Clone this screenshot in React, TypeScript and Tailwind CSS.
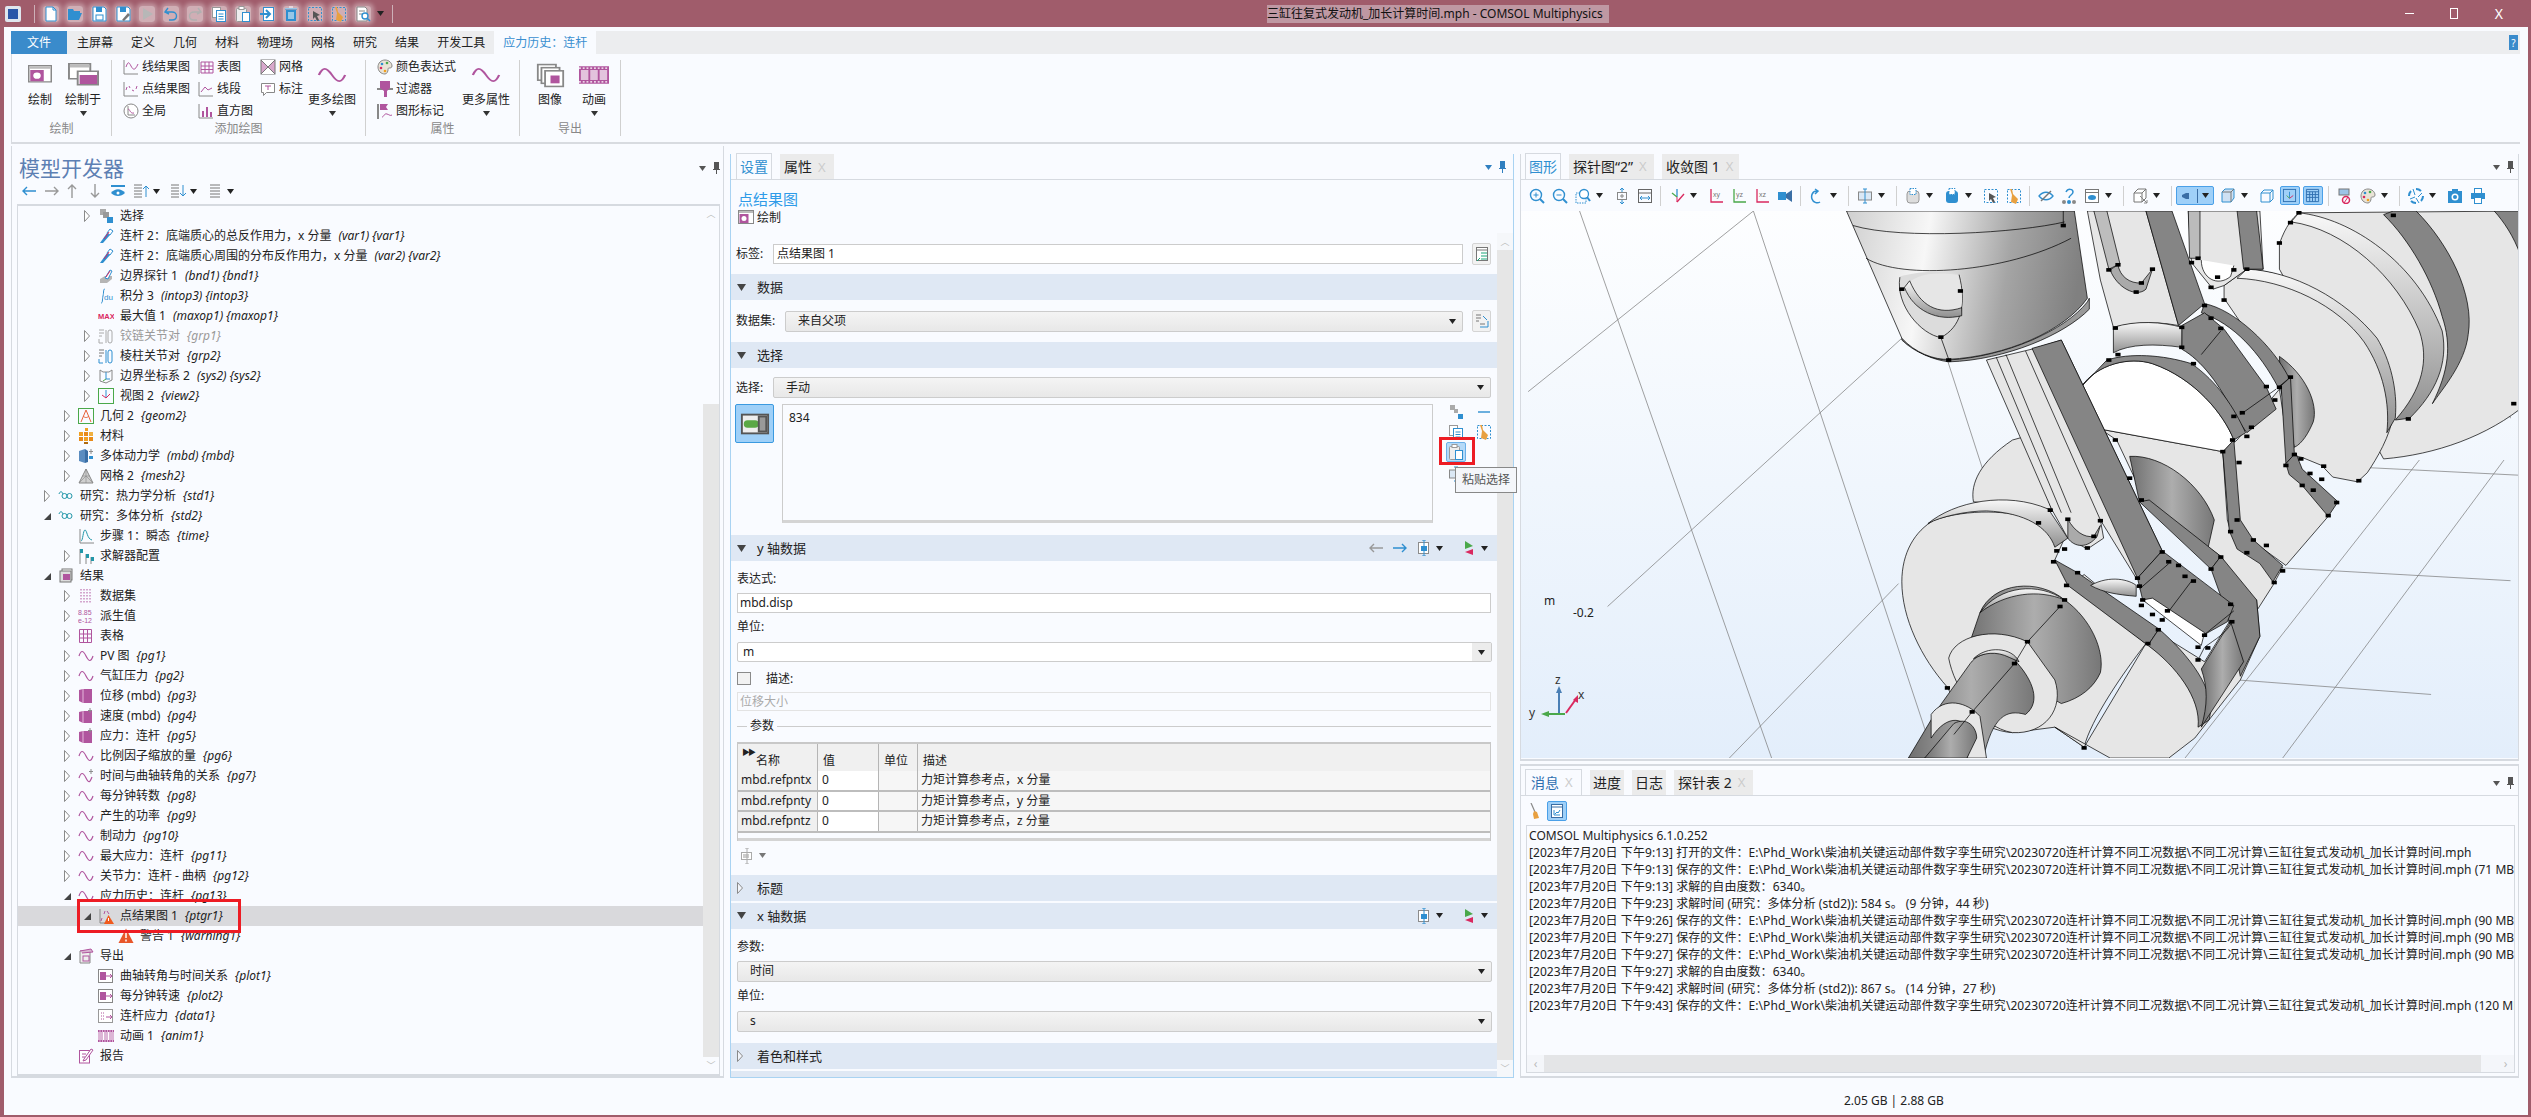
import React from 'react';

const P = '#b0559e';
const B = '#2f8fd0';
const G = '#8c8c8c';
const R = '#d9295f';
const GR = '#4aa84a';

const icons: Record<string, React.ReactNode> = {
  wave: <path d="M1 8C3 2 5 2 8 8S13 14 15 8" stroke={P} strokeWidth="1.2" />,
  waveStar: <><path d="M1 10C3 4 5 4 8 10S12 14 14 9" stroke={P} strokeWidth="1.2" /><path d="M13 1v5M11 3.500h4" stroke={G} /></>,
  sel: <><rect x="2" y="1" width="6" height="6" fill="#aaa" /><rect x="5" y="4" width="6" height="6" fill="#999" /><rect x="9" y="9" width="6" height="6" fill={B} /></>,
  probe: <><path d="M2 15L9 5l3 2-7 8z" fill={B} /><path d="M9 5l3-4 3 2-3 4z" fill="#fff" stroke={B} /><path d="M6 11l5-7" stroke={R} /></>,
  bnd: <><path d="M2 15v-4l5-3h7v3l-5 4z" fill="#b5b5b5" /><path d="M7 10l5-8 2 1-4 8z" fill="#fff" stroke={B} /><path d="M8 9l4-6" stroke={R} /></>,
  int: <><path d="M3 15c2 0 1-3 2-7s0-7 2-7" stroke={B} /><text x="6" y="12" fontSize="8" fill={B} fontFamily="Liberation Sans">du</text></>,
  max: <text x="0" y="11" fontSize="7.500" fontWeight="700" fill={R} fontFamily="Liberation Sans">MAX</text>,
  joint: <><path d="M1 2h5M1 5h5M1 8h3M1 11v4h4M8 2v13" stroke="#aaa" /><rect x="10" y="2" width="4" height="13" rx="2" stroke="#aaa" /></>,
  joint2: <><path d="M1 2h5M1 5h5M1 8h3" stroke="#777" /><path d="M1 11v4h4M8 2v13" stroke={B} /><rect x="10" y="2" width="4" height="13" rx="2" stroke={B} /></>,
  sys: <><path d="M2 2l3 2h6l3-2v10l-6 3-6-2z" stroke="#888" /><path d="M8 4v7h4" stroke={B} /><path d="M8 11l-3 2" stroke={GR} /></>,
  view: <><rect x="0.500" y="0.500" width="15" height="15" stroke={GR} /><path d="M8 2v8" stroke={B} /><path d="M8 10l4-4" stroke={R} /><path d="M8 10L4 7" stroke={R} /></>,
  geom: <><rect x="0.500" y="0.500" width="15" height="15" stroke={GR} /><path d="M3 14L8 2l5 12M5 8c2 2 4 2 6 0" stroke="#e8623a" /></>,
  mat: <><rect x="7" y="0" width="3" height="3" fill="#f0a020" /><rect x="1" y="4" width="4" height="4" fill="#f0a020" /><rect x="6" y="4" width="4" height="4" fill="#e88a18" /><rect x="11" y="4" width="4" height="4" fill="#f0b040" /><rect x="1" y="9" width="4" height="4" fill="#e88a18" /><rect x="6" y="9" width="4" height="4" fill="#f0a020" /><rect x="11" y="9" width="4" height="4" fill="#e88a18" /><rect x="6" y="14" width="4" height="2" fill="#b06a10" /></>,
  mbd: <><path d="M1 3l6-2v14l-6-2z" fill="#5a8cc0" /><path d="M7 1l3 2v11l-3 1z" fill="#3a6ea5" /><path d="M13 1v5M11 3.500h4" stroke={G} /><rect x="11" y="8" width="4" height="3" fill={B} /></>,
  mesh: <><path d="M8 1l7 14H1z" fill="#cfcfcf" stroke="#888" /><path d="M8 1v14M4.500 8h7M1 15l7-7 7 7" stroke="#888" strokeWidth="0.600" /></>,
  study: <path d="M1 6c1-3 3-3 4 0M4 8a2.500 2.500 0 105 0 2.500 2.500 0 10-5 0M9 8a2.500 2.500 0 105 0 2.500 2.500 0 10-5 0" stroke="#2196a8" />,
  step: <><path d="M2 1v14h14" stroke="#888" /><path d="M3 13C5 13 5 2 7 2s2 9 7 10" stroke="#2196a8" /></>,
  solver: <><path d="M2 1v15M8 6v10M13 9v7" stroke="#888" /><path d="M2 1h3v4H2zM8 6h3v4H8zM13 9h3v4h-3z" fill="#2196a8" /></>,
  results: <><rect x="4" y="1" width="10" height="11" fill="#fff" stroke="#777" /><rect x="2" y="3" width="11" height="11" fill="#ddd" stroke="#777" /><rect x="5" y="6" width="7" height="6" fill={P} /></>,
  dset: <path d="M3 1v14M6 1v14M9 1v14M12 1v14" stroke={P} strokeDasharray="1.500 1.500" />,
  derived: <><text x="0" y="7" fontSize="7" fill={P} fontFamily="Liberation Sans">8.85</text><text x="0" y="15" fontSize="7" fill={P} fontFamily="Liberation Sans">e-12</text></>,
  table: <path d="M1.500 1.500h12v13h-12zM1.500 6h12M1.500 10h12M5.500 1.500v13M9.500 1.500v13" stroke={P} />,
  vol: <><path d="M1 2l4-1h9v14H5l-4-2z" fill={P} /><path d="M5 1v14" stroke="#e5b8dc" /></>,
  volStar: <><path d="M1 4l4-1h9v12H5l-4-2z" fill={P} /><path d="M5 3v12" stroke="#e5b8dc" /><path d="M12 0v5M10 2.500h4" stroke={G} fill="#fff" /></>,
  ptgr: <><path d="M2 1v14h7" stroke="#888" /><path d="M3 13l1-3M6 6l1-3M9 3l2 3" stroke={P} /><path d="M10.500 7L16 16H6z" fill="#f05a1e" /><path d="M10.500 10v3" stroke="#fff" /></>,
  warn: <><path d="M8 0.500L15.500 15H0.500z" fill="#e8562a" /><path d="M8 5v5M8 11.500v2" stroke="#fff" strokeWidth="1.500" /></>,
  exp: <><path d="M2 3h10v12H2z" fill="#eee" stroke="#888" /><path d="M2 3l11-2 2 3-11 1" fill="#d8b4d0" stroke={P} /><rect x="5" y="8" width="6" height="5" stroke={P} /></>,
  expPlot: <><rect x="0.500" y="1.500" width="14" height="13" fill="#fff" stroke="#888" /><rect x="2" y="4" width="6" height="8" fill={P} /><path d="M8 8h6M12 6l2 2-2 2" stroke={P} /></>,
  expData: <><rect x="0.500" y="1.500" width="14" height="13" fill="#fff" stroke="#999" /><path d="M3 5h4M3 8h4M3 11h4" stroke={P} strokeDasharray="1 1" /><path d="M8 9h6M12 7l2 2-2 2" stroke={P} /></>,
  anim: <><rect x="0" y="2" width="16" height="12" fill="#dcb6d6" /><path d="M5.500 4v8M10.500 4v8" stroke="#fff" /><path d="M0 3h16M0 13h16" stroke={P} strokeWidth="2" strokeDasharray="1.500 1" /></>,
  report: <><rect x="1.500" y="2.500" width="10" height="12.500" fill="#fff" stroke={P} /><path d="M4 6h4M4 9h3" stroke={P} /><path d="M6 11l7-10 2 1-7 10-3 1z" fill="#fff" stroke={P} /></>,
  plotWin: <><rect x="0.500" y="0.500" width="15" height="13" fill="#fff" stroke="#888" /><rect x="1" y="1" width="14" height="2" fill="#bbb" /><rect x="1.500" y="4" width="9" height="9" fill={P} /><circle cx="6" cy="8.500" r="2.500" fill="#fff" /></>,
  plotIn: <><rect x="0.500" y="0.500" width="11" height="10" fill="#fff" stroke="#888" /><rect x="1" y="1" width="10" height="2" fill="#bbb" /><rect x="5" y="5.500" width="10.500" height="9" fill="#fff" stroke="#888" /><rect x="6" y="8" width="9" height="6" fill={P} /></>,
  line: <><path d="M1 1v14h14" stroke="#888" /><path d="M3 8c2-6 3-5 5-1s4 5 7-2" stroke={P} /></>,
  point: <><path d="M1 1v14h14" stroke="#888" /><path d="M3 9l1-3M6 5l1 2M9 9l2 1M13 8l1-3" stroke={P} /></>,
  global: <><circle cx="8" cy="8" r="7" fill="#fff" stroke="#888" /><path d="M5 3v9h7" stroke="#888" /><path d="M5 6c2 0 2 5 6 4" stroke={P} /></>,
  rtable: <><path d="M1 1v14" stroke="#888" /><path d="M3 3h12v11H3zM3 7h12M3 10.500h12M7 3v11M11 3v11" stroke={P} /></>,
  seg: <><path d="M1 1v14h14" stroke="#888" /><path d="M3 11l4-5 3 3 4-2" stroke={P} /></>,
  hist: <><path d="M1 1v14h14" stroke="#888" /><path d="M4 8h2v6H4zM8 4h2v10H8zM12 9h2v5h-2z" fill={P} /></>,
  rmesh: <><rect x="1" y="1" width="14" height="14" fill="#d8a8cc" stroke="#777" /><path d="M1 1l7 7 7-7M1 15l7-7 7 7" fill="#fff" stroke="#777" /></>,
  note: <><path d="M1.500 2.500h13v9h-8l-3 3v-3h-2z" fill="#fff" stroke="#888" /><path d="M5 5h6M8 5v4" stroke={P} /></>,
  palette: <><path d="M8 1c4 0 7 3 7 6 0 2-2 2-3 2s-1 1-1 2-1 4-3 4c-4 0-7-3-7-7s3-7 7-7z" fill="#e9e3d6" stroke="#888" /><circle cx="5" cy="5" r="1.300" fill={B} /><circle cx="10" cy="4" r="1.300" fill={GR} /><circle cx="4" cy="9" r="1.300" fill={R} /><circle cx="8" cy="12" r="1.300" fill="#f0a020" /></>,
  filter: <><path d="M0 7h16v2H0z" fill="#888" /><path d="M3 0h10v7l-3 3v6H7v-6L3 7z" fill={P} /></>,
  flag: <><path d="M1 1v15" stroke="#888" strokeWidth="2" /><path d="M3 1h8l-2 3 2 3H3z" fill={P} /><path d="M5 14c2 0 2-4 5-3s3 2 5 1" stroke={P} /></>,
  image: <><rect x="1" y="1" width="10" height="10" fill="#fff" stroke="#888" /><rect x="3" y="3" width="10" height="10" fill="#fff" stroke="#888" /><rect x="5" y="5" width="10" height="10" fill="#fff" stroke="#888" /><rect x="8" y="8" width="5" height="5" fill={P} /></>,
  movie: <><rect x="0" y="1" width="16" height="14" fill={P} /><rect x="1" y="4" width="4" height="8" fill="#e3c3dd" /><rect x="6" y="4" width="4" height="8" fill="#e3c3dd" /><rect x="11" y="4" width="4" height="8" fill="#e3c3dd" /><path d="M0 2.500h16M0 13.500h16" stroke="#fff" strokeDasharray="1 1" /></>,
  newf: <><path d="M3 1h7l3 3v11H3z" fill="#fff" stroke={B} /><path d="M10 1v3h3" stroke={B} /></>,
  open: <path d="M1 14V3h5l1 2h6v2H5l-4 7h11l3-7H5" fill={B} />,
  save: <><path d="M2 1h11l2 2v12H2z" fill="#fff" stroke={B} /><rect x="5" y="1" width="6" height="5" fill={B} /><rect x="5" y="9" width="7" height="5" stroke={B} /></>,
  saveAs: <><path d="M2 1h11l2 2v12H2z" fill="#fff" stroke={B} /><rect x="5" y="1" width="6" height="5" fill={B} /><path d="M7 14l6-7 2 2-6 6z" fill="#777" /></>,
  run: <path d="M4 2l10 6-10 6z" fill="#b7b7b7" />,
  undo: <path d="M5 2L2 6l4 2M3 6h6c6 0 6 8 0 8H6" stroke={B} strokeWidth="1.400" />,
  redo: <path d="M11 2l3 4-4 2M13 6H7c-6 0-6 8 0 8h3" stroke="#b0b0b0" strokeWidth="1.400" />,
  copy: <><rect x="1.500" y="1.500" width="8" height="10" fill="#fff" stroke="#999" /><rect x="5.500" y="4.500" width="9" height="11" fill="#fff" stroke={B} /><path d="M7.500 8h5M7.500 10.500h5M7.500 13h5" stroke={B} /></>,
  paste: <><rect x="1.500" y="2.500" width="10" height="13" rx="1" fill="#eee" stroke="#999" /><rect x="4" y="0.500" width="5" height="3" fill="#fff" stroke="#999" /><rect x="7.500" y="6.500" width="7" height="9" fill="#fff" stroke={B} /></>,
  importf: <><rect x="4.500" y="1.500" width="10" height="13" fill="#fff" stroke={B} /><path d="M1 8h9M7 4l4 4-4 4" stroke={B} strokeWidth="2" /></>,
  del: <><path d="M3 4h10v11H3z" fill={B} /><path d="M2 2.500h12M6 1h4M6 6v7M8 6v7M10 6v7" stroke="#fff" /><path d="M2 3h12" stroke={B} /></>,
  selbox: <><rect x="1.500" y="1.500" width="13" height="13" stroke={B} strokeDasharray="2 1.500" /><path d="M6 5l7 4-3 1 2 4-2 1-2-4-2 2z" fill="#555" /></>,
  clear: <><rect x="1.500" y="1.500" width="13" height="13" stroke={B} strokeDasharray="2 1.500" /><path d="M4 1l2 6-1 7 5 2 2-5-5-5-1-5z" fill="#e8a040" /></>,
  find: <><path d="M2 1h8l2 2v12H2z" fill="#fff" stroke="#888" /><path d="M4 5h6M4 8h4" stroke="#888" /><circle cx="10" cy="10" r="3" fill="#fff" stroke={B} strokeWidth="1.400" /><path d="M12 12l3 3" stroke={B} strokeWidth="1.600" /></>,
  back: <path d="M15 8H2M6 4L2 8l4 4" stroke={B} strokeWidth="1.400" />,
  fwd: <path d="M1 8h13M10 4l4 4-4 4" stroke={B} strokeWidth="1.400" />,
  backG: <path d="M15 8H2M6 4L2 8l4 4" stroke="#999" strokeWidth="1.400" />,
  fwdG: <path d="M1 8h13M10 4l4 4-4 4" stroke="#999" strokeWidth="1.400" />,
  upG: <path d="M8 15V2M4 6l4-4 4 4" stroke="#999" strokeWidth="1.400" />,
  downG: <path d="M8 1v13M4 10l4 4 4-4" stroke="#999" strokeWidth="1.400" />,
  eye: <><path d="M1 3h14" stroke={B} strokeWidth="2" /><path d="M1 10c4-5 10-5 14 0-4 4-10 4-14 0z" fill={B} /><circle cx="8" cy="10" r="1.500" fill="#fff" /></>,
  listUp: <><path d="M1 2h8M1 5h8M1 8h8M1 11h8M1 14h8" stroke="#777" /><path d="M13 14V3M10 6l3-3 3 3" stroke={B} /></>,
  listDown: <><path d="M1 2h8M1 5h8M1 8h8M1 11h8M1 14h8" stroke="#777" /><path d="M13 2v11M10 10l3 3 3-3" stroke={B} /></>,
  list: <path d="M3 2h10M3 5h10M3 8h10M3 11h10M3 14h10" stroke="#777" />,
  chip: <><rect x="1" y="3" width="14" height="10" fill="#eee" stroke="#555" /><rect x="2" y="6" width="8" height="4" rx="2" fill="#5aa845" /><rect x="10" y="4" width="4" height="8" fill="#999" stroke="#555" /></>,
  labelBtn: <><rect x="2.500" y="1.500" width="11" height="13" fill="#fff" stroke="#777" /><path d="M3 4h10" stroke="#777" /><path d="M7 7h6M7 10h6M7 13h6M3 15l3-3" stroke="#1aa67a" /></>,
  dsBtn: <><path d="M2 2h5M2 5h5M2 8h3" stroke="#777" /><path d="M9 3l4 4M6 14h8V8" stroke={B} /><path d="M6 11h5" stroke="#777" /></>,
  chain: <><rect x="2" y="1" width="5" height="5" fill="#aaa" /><rect x="6" y="5" width="4" height="4" fill="#aaa" /><rect x="10" y="10" width="5" height="5" fill={B} /></>,
  minus: <path d="M2 8h12" stroke={B} strokeWidth="1.400" />,
  exprBtn: <><rect x="2.500" y="2.500" width="10" height="11" fill="#fff" stroke={G} /><rect x="5" y="6" width="6" height="5" fill={B} /><path d="M8 0v16M6 0h4M6 16h4" stroke={B} /></>,
  exprBtnG: <><rect x="2.500" y="4.500" width="10" height="7" fill="#fff" stroke="#aaa" /><rect x="4" y="6" width="6" height="4" fill="#ccc" /><path d="M8 0v16M6 0h4M6 16h4" stroke="#aaa" /></>,
  flipper: <><path d="M4 1l8 5-8 3z" fill={GR} /><path d="M12 9v6l-8-3z" fill={R} /></>,
  zin: <><circle cx="7" cy="7" r="5.500" stroke={B} strokeWidth="1.400" /><path d="M11 11l4 4" stroke={B} strokeWidth="2" /><path d="M4.500 7h5M7 4.500v5" stroke={B} /></>,
  zout: <><circle cx="7" cy="7" r="5.500" stroke={B} strokeWidth="1.400" /><path d="M11 11l4 4" stroke={B} strokeWidth="2" /><path d="M4.500 7h5" stroke={B} /></>,
  zbox: <><rect x="1" y="5" width="10" height="10" stroke={B} strokeDasharray="1.500 1" /><circle cx="9" cy="6" r="4.500" fill="#fff" stroke={B} strokeWidth="1.300" /><path d="M12 9l3 4" stroke={B} strokeWidth="2" /></>,
  zext: <><rect x="3.500" y="4.500" width="9" height="7" stroke="#888" /><path d="M8 0v4M8 12v4M6 2l2-2 2 2M6 14l2 2 2-2" stroke={B} /><path d="M6 8h4M8 6v4" stroke="#888" /></>,
  zsel: <><rect x="1.500" y="1.500" width="13" height="13" stroke="#666" /><path d="M1 5h14" stroke="#666" /><path d="M3 10h10M5 8l-2 2 2 2M11 8l2 2-2 2" stroke={B} /></>,
  axes: <><path d="M8 1v8" stroke={B} strokeWidth="1.300" /><path d="M8 9L3 5" stroke={GR} strokeWidth="1.300" /><path d="M8 14l7-8" stroke={R} strokeWidth="1.300" /><path d="M8 9v5" stroke={R} /></>,
  xy: <><path d="M3 1v13h12" stroke={R} strokeWidth="1.300" /><text x="5" y="9" fontSize="7" fill="#777" fontFamily="Liberation Sans">xy</text></>,
  yz: <><path d="M3 1v13h12" stroke={GR} strokeWidth="1.300" /><text x="5" y="9" fontSize="7" fill="#777" fontFamily="Liberation Sans">yz</text></>,
  xz: <><path d="M3 1v13h12" stroke={R} strokeWidth="1.300" /><text x="5" y="9" fontSize="7" fill="#777" fontFamily="Liberation Sans">xz</text></>,
  cam: <><path d="M1 4h8v8H1z" fill={B} /><path d="M9 6l6-4v12l-6-4z" fill="#3a6ea5" /></>,
  rot: <path d="M8 3C3 3 2 8 3 11s5 5 8 3M6 1l3 2-3 3" stroke={B} strokeWidth="1.500" />,
  lights: <><rect x="1.500" y="4" width="13" height="8" fill="#dbe8f5" stroke="#888" /><path d="M8 1v14M6 1h4M6 15h4" stroke={B} /></>,
  mouse1: <><rect x="2" y="3" width="12" height="12" rx="3" fill="#ddd" stroke="#999" /><rect x="5" y="0.500" width="6" height="6" fill="#fff" stroke={B} strokeDasharray="1.500 1" /></>,
  mouse2: <><rect x="2" y="3" width="12" height="12" rx="3" fill={B} /><rect x="5" y="0.500" width="6" height="6" fill="#fff" stroke={B} strokeDasharray="1.500 1" /></>,
  hide: <><path d="M1 8c4-5 10-5 14 0-4 5-10 5-14 0z" stroke={B} strokeWidth="1.300" /><path d="M3 13L13 3" stroke="#777" strokeWidth="1.400" /></>,
  reset: <><path d="M5 4c2-4 7-3 7 0s-4 3-4 6" stroke={B} strokeWidth="1.500" /><circle cx="3" cy="14" r="2" fill="#888" /><circle cx="8" cy="14" r="2" fill={B} /><circle cx="13" cy="14" r="2" fill="#888" /></>,
  hideWin: <><rect x="1.500" y="1.500" width="13" height="13" fill="#fff" stroke="#777" /><path d="M1 4.500h14" stroke="#777" /><ellipse cx="8" cy="9.500" rx="4" ry="2.500" fill={B} /></>,
  cube: <><path d="M2 5l4-4h8v9l-4 4H2z" fill="#fff" stroke="#777" /><path d="M2 5h8v9M10 5l4-4" stroke="#777" /><path d="M8 8l7 7M12 15h3v-3" stroke="#888" /></>,
  lightOn: <path d="M6 5h3v6H6L2 9V7z" fill="#3a6ea5" />,
  box3d: <><path d="M2 4l3-3h9v9l-3 4H2z" fill="#cfe1f3" stroke={B} /><path d="M2 4h9v10M11 4l3-3" stroke="#777" /></>,
  wire: <><path d="M2 5l3-3h9v9l-3 3H2z" stroke={B} /><path d="M2 5h9v9M11 5l3-3" stroke={B} /></>,
  gridAxis: <><rect x="1.500" y="1.500" width="13" height="13" stroke="#2f6fb0" /><path d="M8 4v7" stroke={B} /><path d="M8 11l4-3" stroke={R} /><path d="M8 11L5 8" stroke={GR} /></>,
  gridT: <path d="M1.500 1.500h13v13h-13zM1.500 4h13M1.500 7h13M1.500 10h13M5 4v10.500M8 4v10.500M11 4v10.500" stroke="#2f6fb0" />,
  noShow: <><rect x="2" y="1" width="10" height="6" fill="#9cc3e6" stroke="#777" /><circle cx="9" cy="12" r="3.500" stroke={R} strokeWidth="1.500" /><path d="M7 15l4-6" stroke={R} /></>,
  cam2: <><rect x="1" y="3" width="14" height="12" fill={B} /><rect x="5" y="1" width="6" height="3" fill={B} /><circle cx="8" cy="9" r="3.500" fill="#fff" /><circle cx="8" cy="9" r="2" fill={B} /></>,
  print: <><rect x="4.500" y="0.500" width="7" height="5" fill="#fff" stroke={B} /><rect x="1" y="5" width="14" height="6" fill={B} /><rect x="4.500" y="9.500" width="7" height="6" fill="#fff" stroke={B} /></>,
  iris: <g stroke={B} strokeWidth="2"><path d="M8 1a7 7 0 015 2" /><path d="M15 8a7 7 0 01-2 5" /><path d="M8 15a7 7 0 01-5-2" /><path d="M1 8a7 7 0 012-5" /><path d="M14 5l-4 4M11 15l-3-5M2 11l5-2M5 1l2 6" strokeWidth="1" /></g>,
  broom: <><path d="M3 0l4 9" stroke="#888" strokeWidth="1.200" /><path d="M6 8l3 1 2 6-5 1-1-5z" fill="#e8a040" /></>,
  winPlot: <><rect x="2.500" y="1.500" width="11" height="13" fill="#fff" stroke="#3a6ea5" /><path d="M3 4h10" stroke="#3a6ea5" /><path d="M5 7v5h6M6 11l2-2 1 1 2-3" stroke={B} /></>,
};

function I({ n, s = 16, w, h, c = '' }: { n: string; s?: number; w?: number; h?: number; c?: string }) {
  return (
    <svg width={w ?? s} height={h ?? s} viewBox="0 0 16 16" preserveAspectRatio="none" className={`shrink-0 ${c}`} fill="none">
      {icons[n]}
    </svg>
  );
}

const Caret = ({ c = '#222' }: { c?: string }) => (
  <svg width="7" height="5" viewBox="0 0 7 5" className="shrink-0"><path d="M0 0h7L3.500 5z" fill={c} /></svg>
);

function PanelPins({ blue }: { blue?: boolean }) {
  const c = blue ? '#2f7fc0' : '#555';
  return (
    <div className="flex items-center gap-[7px]">
      <Caret c={c} />
      <svg width="7" height="12" viewBox="0 0 7 12"><path d="M1 0h5v7h1v1H4v4H3V8H0V7h1z" fill={c} /></svg>
    </div>
  );
}

type Row = [number, '' | 'r' | 'd', string, string, string?, boolean?];

const rows: Row[] = [
  [4, 'r', 'sel', '选择'],
  [4, '', 'probe', '连杆 2：底端质心的总反作用力，x 分量', '(var1) {var1}'],
  [4, '', 'probe', '连杆 2：底端质心周围的分布反作用力，x 分量', '(var2) {var2}'],
  [4, '', 'bnd', '边界探针 1', '(bnd1) {bnd1}'],
  [4, '', 'int', '积分 3', '(intop3) {intop3}'],
  [4, '', 'max', '最大值 1', '(maxop1) {maxop1}'],
  [4, 'r', 'joint', '铰链关节对', '{grp1}', true],
  [4, 'r', 'joint2', '棱柱关节对', '{grp2}'],
  [4, 'r', 'sys', '边界坐标系 2', '(sys2) {sys2}'],
  [4, 'r', 'view', '视图 2', '{view2}'],
  [3, 'r', 'geom', '几何 2', '{geom2}'],
  [3, 'r', 'mat', '材料'],
  [3, 'r', 'mbd', '多体动力学', '(mbd) {mbd}'],
  [3, 'r', 'mesh', '网格 2', '{mesh2}'],
  [2, 'r', 'study', '研究：热力学分析', '{std1}'],
  [2, 'd', 'study', '研究：多体分析', '{std2}'],
  [3, '', 'step', '步骤 1：瞬态', '{time}'],
  [3, 'r', 'solver', '求解器配置'],
  [2, 'd', 'results', '结果'],
  [3, 'r', 'dset', '数据集'],
  [3, 'r', 'derived', '派生值'],
  [3, 'r', 'table', '表格'],
  [3, 'r', 'wave', 'PV 图', '{pg1}'],
  [3, 'r', 'wave', '气缸压力', '{pg2}'],
  [3, 'r', 'vol', '位移 (mbd)', '{pg3}'],
  [3, 'r', 'volStar', '速度 (mbd)', '{pg4}'],
  [3, 'r', 'volStar', '应力：连杆', '{pg5}'],
  [3, 'r', 'wave', '比例因子缩放的量', '{pg6}'],
  [3, 'r', 'waveStar', '时间与曲轴转角的关系', '{pg7}'],
  [3, 'r', 'wave', '每分钟转数', '{pg8}'],
  [3, 'r', 'wave', '产生的功率', '{pg9}'],
  [3, 'r', 'wave', '制动力', '{pg10}'],
  [3, 'r', 'wave', '最大应力：连杆', '{pg11}'],
  [3, 'r', 'wave', '关节力：连杆 - 曲柄', '{pg12}'],
  [3, 'd', 'wave', '应力历史：连杆', '{pg13}'],
  [4, 'd', 'ptgr', '点结果图 1', '{ptgr1}'],
  [5, '', 'warn', '警告 1', '{warning1}'],
  [3, 'd', 'exp', '导出'],
  [4, '', 'expPlot', '曲轴转角与时间关系', '{plot1}'],
  [4, '', 'expPlot', '每分钟转速', '{plot2}'],
  [4, '', 'expData', '连杆应力', '{data1}'],
  [4, '', 'anim', '动画 1', '{anim1}'],
  [3, '', 'report', '报告'],
];

const indentClass: Record<number, string> = { 2: 'pl-[26px]', 3: 'pl-[46px]', 4: 'pl-[66px]', 5: 'pl-[86px]' };

function TreeRow({ row, selected }: { row: Row; selected: boolean }) {
  const [lvl, exp, icon, label, tag, gray] = row;
  return (
    <div className={`flex h-[20px] shrink-0 items-center whitespace-nowrap ${indentClass[lvl]} ${selected ? 'bg-[#d9d9dc]' : ''} ${gray ? 'text-[#999]' : 'text-[#222]'}`}>
      <span className="flex w-[14px] shrink-0 items-center">
        {exp === 'r' && <svg width="6" height="12" viewBox="0 0 6 12"><path d="M0.500 0.500L5.500 6 0.500 11.500z" fill="#fff" stroke="#8a8a8a" /></svg>}
        {exp === 'd' && <svg width="7" height="7" viewBox="0 0 7 7"><path d="M7 0v7H0z" fill="#444" /></svg>}
      </span>
      <I n={icon} />
      <span className="ml-[6px]">{label}</span>
      {tag && <span className="ml-[7px] italic">{tag}</span>}
    </div>
  );
}

function RibbonSmall({ icon, text }: { icon: string; text: string }) {
  return (
    <div className="flex h-[22px] items-center gap-[3px] whitespace-nowrap">
      <I n={icon} />
      <span>{text}</span>
    </div>
  );
}

function RibbonBig({ icon, w, h, text, arrow, width }: { icon: string; w: number; h: number; text: string; arrow?: boolean; width: string }) {
  return (
    <div className={`flex flex-col items-center pt-[4px] ${width}`}>
      <div className="flex h-[30px] items-center justify-center"><I n={icon} w={w} h={h} /></div>
      <span className="mt-[2px] leading-[16px] whitespace-nowrap">{text}</span>
      {arrow && <span className="mt-[3px] flex"><Caret c="#333" /></span>}
    </div>
  );
}

function RibbonGroup({ title, width, children }: { title: string; width: string; children: React.ReactNode }) {
  return (
    <div className={`flex h-[76px] shrink-0 flex-col border-r border-[#d0d0d0] ${width}`}>
      <div className="-mt-[4px] h-[72px]">{children}</div>
      <div className="text-center leading-[14px] text-[#888]">{title}</div>
    </div>
  );
}

function Ribbon() {
  const tabs = [
    ['主屏幕', 'ml-[10px]'], ['定义', 'ml-[18px]'], ['几何', 'ml-[18px]'], ['材料', 'ml-[18px]'], ['物理场', 'ml-[18px]'],
    ['网格', 'ml-[18px]'], ['研究', 'ml-[18px]'], ['结果', 'ml-[18px]'], ['开发工具', 'ml-[18px]'],
  ];
  return (
    <div className="mx-[7px] w-[2509px] shrink-0">
      <div className="flex h-[23px] items-center bg-[#ecedef] text-[#222]">
        <div className="flex h-[23px] w-[56px] items-center justify-center bg-[#3a8bcb] text-white">文件</div>
        {tabs.map(([t, m]) => <span key={t} className={m}>{t}</span>)}
        <div className="ml-[9px] flex h-[23px] w-[102px] items-center justify-center bg-[#f9fbff] text-[#3a8fd0]">应力历史：连杆</div>
        <div className="ml-auto mr-[2px] flex h-[15px] w-[9px] items-center justify-center bg-[#3a8bcb] text-[10px] text-white">?</div>
      </div>
      <div className="flex h-[90px] border-b-2 border-l border-[#d8dbe0] pt-[6px] text-[#222]">
        <RibbonGroup title="绘制" width="w-[100px]">
          <div className="flex pl-[12px]">
            <RibbonBig icon="plotWin" w={24} h={20} text="绘制" width="w-[32px]" />
            <RibbonBig icon="plotIn" w={31} h={24} text="绘制于" arrow width="w-[38px] ml-[8px]" />
          </div>
        </RibbonGroup>
        <RibbonGroup title="添加绘图" width="w-[254px]">
          <div className="flex pl-[11px]">
            <div className="w-[75px]">
              <RibbonSmall icon="line" text="线结果图" />
              <RibbonSmall icon="point" text="点结果图" />
              <RibbonSmall icon="global" text="全局" />
            </div>
            <div className="w-[62px]">
              <RibbonSmall icon="rtable" text="表图" />
              <RibbonSmall icon="seg" text="线段" />
              <RibbonSmall icon="hist" text="直方图" />
            </div>
            <div className="w-[48px]">
              <RibbonSmall icon="rmesh" text="网格" />
              <RibbonSmall icon="note" text="标注" />
            </div>
            <RibbonBig icon="wave" w={30} h={22} text="更多绘图" arrow width="w-[48px]" />
          </div>
        </RibbonGroup>
        <RibbonGroup title="属性" width="w-[154px]">
          <div className="flex pl-[11px]">
            <div className="w-[85px]">
              <RibbonSmall icon="palette" text="颜色表达式" />
              <RibbonSmall icon="filter" text="过滤器" />
              <RibbonSmall icon="flag" text="图形标记" />
            </div>
            <RibbonBig icon="wave" w={30} h={22} text="更多属性" arrow width="w-[48px]" />
          </div>
        </RibbonGroup>
        <RibbonGroup title="导出" width="w-[101px]">
          <div className="flex pl-[15px]">
            <RibbonBig icon="image" w={29} h={25} text="图像" width="w-[30px]" />
            <RibbonBig icon="movie" w={30} h={20} text="动画" arrow width="w-[30px] ml-[14px]" />
          </div>
        </RibbonGroup>
      </div>
    </div>
  );
}

function SectionBar({ title, open = true, tools, mt = '' }: { title: string; open?: boolean; tools?: React.ReactNode; mt?: string }) {
  return (
    <div className={`flex h-[26px] shrink-0 items-center bg-[#dfe8f4] pl-[6px] pr-[9px] text-[13px] text-[#222] ${mt}`}>
      <span className="flex w-[20px] items-center">
        {open ? <svg width="9" height="7" viewBox="0 0 9 7"><path d="M0 0h9L4.500 7z" fill="#444" /></svg>
          : <svg width="6" height="12" viewBox="0 0 6 12"><path d="M0.500 0.500L5.500 6 0.500 11.500z" fill="#f2f5fa" stroke="#8a8a8a" /></svg>}
      </span>
      <span>{title}</span>
      {tools && <div className="ml-auto flex items-center">{tools}</div>}
    </div>
  );
}

function ComboBox({ text, w, white, ml = '' }: { text: string; w: string; white?: boolean; ml?: string }) {
  if (white) {
    return (
      <div className={`flex h-[20px] items-center rounded-[2px] border border-[#ccc] bg-white pl-[5px] ${w} ${ml}`}>
        <span>{text}</span>
        <span className="ml-auto flex h-full w-[19px] items-center justify-center bg-[#ececec]"><Caret /></span>
      </div>
    );
  }
  return (
    <div className={`flex h-[21px] items-center rounded-[2px] border border-[#ccc] bg-gradient-to-b from-[#f4f4f4] to-[#e8e8e8] pl-[12px] pr-[6px] ${w} ${ml}`}>
      <span>{text}</span>
      <span className="ml-auto"><Caret /></span>
    </div>
  );
}

const SideBtn = ({ n }: { n: string }) => (
  <div className="ml-[9px] flex h-[22px] w-[19px] items-center justify-center rounded-[2px] border border-[#d4d4d4] bg-[#f2f2f2]"><I n={n} /></div>
);

const tableRows = [
  ['mbd.refpntx', '力矩计算参考点，x 分量'],
  ['mbd.refpnty', '力矩计算参考点，y 分量'],
  ['mbd.refpntz', '力矩计算参考点，z 分量'],
];

const XTools = () => (
  <div className="flex items-center gap-[4px]">
    <I n="exprBtn" />
    <Caret />
    <span className="ml-[14px]"><I n="flipper" /></span>
    <Caret />
  </div>
);

function SettingsPanel() {
  return (
    <div className="relative mt-[10px] flex h-[924px] w-[784px] shrink-0 flex-col border-x border-b border-[#a9d3f2] text-[#222]">
      <div className="flex h-[26px] shrink-0 items-end border-b border-[#d6dae0] pl-[5px] pr-[7px]">
        <div className="flex h-[26px] w-[36px] items-center justify-center border border-b-0 border-[#d6dae0] bg-[#f9fbff] text-[14px] leading-none text-[#2f8fd0]">设置</div>
        <div className="ml-[8px] flex h-[25px] w-[54px] items-center gap-[6px] bg-[#ebebeb] pl-[4px] text-[14px]">属性<span className="text-[13px] text-[#ccc]">X</span></div>
        <div className="ml-auto mb-[6px]"><PanelPins blue /></div>
      </div>
      <div className="h-[53px] shrink-0 pl-[7px] pt-[9px]">
        <div className="text-[15px] leading-[20px] text-[#2f9be8]">点结果图</div>
        <div className="flex items-center gap-[3px] pt-[1px]"><I n="plotWin" />绘制</div>
      </div>
      <div className="flex min-h-0 flex-1">
        <div className="flex w-[766px] flex-col overflow-hidden">
          <div className="flex shrink-0 items-center pl-[5px] pr-[6px] pt-[10px]">
            <span className="w-[37px]">标签:</span>
            <div className="flex h-[20px] w-[690px] items-center border border-[#ccc] bg-white pl-[3px]">点结果图 1</div>
            <SideBtn n="labelBtn" />
          </div>
          <SectionBar title="数据" mt="mt-[9px]" />
          <div className="flex shrink-0 items-center pl-[5px] pr-[6px] pt-[10px]">
            <span className="w-[49px]">数据集:</span>
            <ComboBox text="来自父项" w="w-[679px]" />
            <SideBtn n="dsBtn" />
          </div>
          <SectionBar title="选择" mt="mt-[10px]" />
          <div className="flex shrink-0 items-center pl-[5px] pr-[6px] pt-[9px]">
            <span className="w-[37px]">选择:</span>
            <ComboBox text="手动" w="w-[719px]" />
          </div>
          <div className="flex shrink-0 pl-[4px] pt-[6px]">
            <div className="flex h-[39px] w-[39px] items-center justify-center rounded-[2px] border border-[#3b9ae0] bg-[#9fd0f8]"><I n="chip" s={30} /></div>
            <div className="ml-[8px] h-[119px] w-[651px] border border-b-[3px] border-[#ccc] border-b-[#d4d4d4] pl-[6px] pt-[5px]">834</div>
            <div className="ml-[15px] grid h-[80px] grid-cols-[16px_16px] content-start gap-x-[12px] gap-y-[4px]">
              <I n="chain" /><I n="minus" />
              <I n="copy" /><I n="clear" />
              <div className="-mx-[2px] -mt-[2px] flex h-[20px] w-[20px] items-center justify-center rounded-[2px] border border-[#6cb0e8] bg-[#b5daf8]"><I n="paste" /></div><span />
              <I n="lights" /><span />
            </div>
          </div>
          <SectionBar
            title="y 轴数据"
            mt="mt-[12px]"
            tools={<><I n="backG" /><span className="ml-[8px]"><I n="fwd" /></span><span className="ml-[8px]"><XTools /></span></>}
          />
          <div className="flex shrink-0 flex-col px-[6px]">
            <div className="mt-[10px] leading-[16px]">表达式:</div>
            <div className="mt-[6px] flex h-[20px] items-center border border-[#ccc] bg-white pl-[2px]">mbd.disp</div>
            <div className="mt-[6px] leading-[16px]">单位:</div>
            <ComboBox text="m" w="w-[755px]" white ml="mt-[7px]" />
            <div className="mt-[10px] flex h-[13px] items-center">
              <span className="h-[13px] w-[14px] border border-[#8a8a8a] bg-[#f2f2f2]" />
              <span className="ml-[15px]">描述:</span>
            </div>
            <div className="mt-[7px] flex h-[19px] items-center border border-[#e3e3e3] pl-[2px] text-[#aaa]">位移大小</div>
            <div className="mt-[7px] flex h-[16px] items-center">
              <span className="h-px w-[10px] bg-[#ccc]" />
              <span className="mx-[3px]">参数</span>
              <span className="h-px flex-1 bg-[#ccc]" />
            </div>
            <div className="mt-[8px] border-x border-t-2 border-[#c8c8c8]">
              <div className="flex h-[27px] bg-[#f0f0f0]">
                <div className="relative w-[80px] border-r border-[#b5b5b5] pl-[18px] pt-[9px]">
                  <span className="absolute left-[4px] top-[3px] text-[8px] leading-[10px] tracking-[-2px]">▶▶</span>名称
                </div>
                <div className="w-[61px] border-r border-[#b5b5b5] pl-[5px] pt-[9px]">值</div>
                <div className="w-[39px] border-r border-[#b5b5b5] pl-[5px] pt-[9px]">单位</div>
                <div className="flex-1 pl-[5px] pt-[9px]">描述</div>
              </div>
              {tableRows.map(([name, desc]) => (
                <div key={name} className="flex h-[20.500px] items-center border-b-2 border-[#bdbdbd]">
                  <div className="flex h-full w-[80px] items-center border-r border-[#b5b5b5] bg-[#f0f0f0] pl-[3px]">{name}</div>
                  <div className="flex h-full w-[61px] items-center border-r border-[#b5b5b5] bg-white pl-[4px]">0</div>
                  <div className="h-full w-[39px] border-r border-[#b5b5b5] bg-[#f6f6f6]" />
                  <div className="flex h-full flex-1 items-center bg-[#f6f6f6] pl-[3px]">{desc}</div>
                </div>
              ))}
              <div className="h-[8px] border-b-[3px] border-[#d4d4d4]" />
            </div>
            <div className="mt-[7px] flex h-[16px] items-center gap-[4px] pl-[2px]"><I n="exprBtnG" /><Caret c="#777" /></div>
          </div>
          <SectionBar title="标题" open={false} mt="mt-[11px]" />
          <SectionBar title="x 轴数据" mt="mt-[2px]" tools={<XTools />} />
          <div className="flex shrink-0 flex-col px-[6px]">
            <div className="mt-[10px] leading-[16px]">参数:</div>
            <ComboBox text="时间" w="w-[755px]" ml="mt-[6px]" />
            <div className="mt-[6px] leading-[16px]">单位:</div>
            <ComboBox text="s" w="w-[755px]" ml="mt-[7px]" />
          </div>
          <SectionBar title="着色和样式" open={false} mt="mt-[11px]" />
          <SectionBar title="质量" open={false} mt="mt-[2px]" />
        </div>
        <div className="flex w-[16px] flex-col bg-[#e6e6e6]">
          <div className="h-[17px] bg-[#f5f7fa] text-center text-[9px] leading-[17px] text-[#bbb]">︿</div>
          <div className="flex-1" />
          <div className="h-[17px] bg-[#f5f7fa] text-center text-[9px] leading-[17px] text-[#bbb]">﹀</div>
        </div>
      </div>
      <div className="absolute left-[708px] top-[283px] h-[28px] w-[36px] border-[3px] border-[#ed1c24]" />
      <div className="absolute left-[724px] top-[313px] flex h-[26px] w-[62px] items-center justify-center border border-[#888] bg-[#f4f6fa] text-[#555]">粘贴选择</div>
    </div>
  );
}

const gfxTools: [string, boolean?, boolean?][] = [
  ['zin'], ['zout'], ['zbox', true], ['zext'], ['zsel'], ['|'],
  ['axes', true], ['xy'], ['yz'], ['xz'], ['cam'], ['|'],
  ['rot', true], ['|'], ['lights', true], ['|'], ['mouse1', true], ['mouse2', true], ['selbox'], ['clear'], ['|'],
  ['hide'], ['reset'], ['hideWin', true], ['|'], ['cube', true], ['|'],
  ['lightOn', true, true], ['box3d', true], ['wire'], ['gridAxis', false, true], ['gridT', false, true], ['|'],
  ['noShow'], ['palette', true], ['|'], ['iris', true], ['cam2'], ['print'],
];

function GfxToolbar() {
  return (
    <div className="flex h-[31px] shrink-0 items-center pl-[4px]">
      {gfxTools.map(([n, arrow, on], i) => {
        if (n === '|') return <span key={i} className="mx-[4px] h-[20px] w-px bg-[#d0d0d0]" />;
        if (n === 'lightOn') {
          return (
            <div key={i} className="mr-[2px] flex h-[19px] w-[38px] items-center rounded-[2px] border border-[#4aa0e8] bg-[#9fd0f8] pl-[3px]">
              <I n={n} /><span className="mx-[1px] h-[14px] w-px bg-[#3a6ea5]" /><span className="ml-[3px]"><Caret /></span>
            </div>
          );
        }
        return (
          <div key={i} className="flex items-center">
            <span className={`mx-[1.500px] flex h-[19px] w-[20px] items-center justify-center ${on ? 'rounded-[2px] border border-[#4aa0e8] bg-[#9fd0f8]' : ''}`}><I n={n} s={on ? 15 : 16} /></span>
            {arrow && <span className="ml-[2px] mr-[7px] flex"><Caret /></span>}
          </div>
        );
      })}
    </div>
  );
}

// crankshaft drawn in the coordinates read from the reference crop
const nodes = [
  [848,70],[600,245],[690,250],[660,377],[672,440],[918,192],[932,178],[985,190],[968,228],[960,253],[1055,160],[1045,172],[1085,212],[1110,192],[1075,240],[1130,190],[1095,275],[1065,290],[1075,325],[1090,353],[1030,350],[928,352],[1030,405],[1048,450],[918,440],[932,425],[1197,487],[1180,515],[1160,513],[1173,550],[1123,585],[1110,595],[1137,625],[1130,650],[1108,660],[1093,692],[1118,722],[1190,730],[1203,700],[1213,712],[1248,732],[1302,772],[1378,602],[1540,560],[1197,62],[1210,35],[1180,118],[1355,42],[928,660],[950,765],[968,825],[1115,880],[1105,912],[1140,935],[1130,970],[1160,950],[1185,1020],[1172,1052],[1268,832],[1255,868],[1227,752],[1245,768],[1215,785],[1232,798],
  [828,853],[810,888],[855,878],[905,882],[895,925],[885,957],[850,960],[838,965],[833,995],[870,1025],[853,1060],[1000,968],[1010,995],[1025,1005],[1035,1035],[1048,1048],[962,1040],[965,1062],[970,1100],[968,1115],[985,1140],[1000,1155],[1008,1130],[1105,1112],[1107,1160],[1065,1197],[1055,1230],[1070,1232],[1055,1265],[994,1182],[978,1220],[850,1100],[843,1118],[793,1215],[773,1275],[708,1408],[670,1342],[880,1507],[1090,982],[1075,1015],
];

function Crankshaft() {
  const dk = '#858585';
  const lt = '#e6e6e6';
  return (
    <svg width="997" height="547" viewBox="0 0 997 547" className="block shrink-0">
      <defs>
        <linearGradient id="sky" x1="0" y1="0" x2="0" y2="1"><stop offset="0" stopColor="#fdfeff" /><stop offset="1" stopColor="#e3eefb" /></linearGradient>
        <linearGradient id="metal" x1="0" y1="0" x2="1" y2="0.100"><stop offset="0" stopColor="#cfcfcf" /><stop offset="0.350" stopColor="#f7f7f7" /><stop offset="0.700" stopColor="#a5a5a5" /><stop offset="1" stopColor="#808080" /></linearGradient>
        <linearGradient id="steel" x1="0" y1="0" x2="1" y2="0"><stop offset="0" stopColor="#6f6f6f" /><stop offset="0.500" stopColor="#adadad" /><stop offset="1" stopColor="#777" /></linearGradient>
        <linearGradient id="sheen" x1="0" y1="0" x2="0" y2="1"><stop offset="0" stopColor="#f8f8f8" /><stop offset="1" stopColor="#8f8f8f" /></linearGradient>
      </defs>
      <rect width="997" height="547" fill="url(#sky)" />
      <g transform="translate(-9.770 -10.900) scale(0.651 0.3635)" stroke="#000" strokeWidth="1.400" strokeLinejoin="round">
        <g stroke="#7a7a7a" fill="none">
          <path d="M105 30L400 1535M372 30L640 1480M372 30L26 527M600 380L148 1118M595 1055L335 1535M670 440L725 745M1525 715L1185 1535M1395 715L1035 1535M1305 735L1550 757M1185 1012L1535 1047M1115 1320L1413 1360M1530 570L1535 600" />
        </g>
        <path d="M1180 120C1190 70 1200 50 1210 35L1560 30V560C1500 650 1420 700 1340 712L1180 190z" fill={lt} />
        <path d="M1210 35C1290 50 1390 170 1430 360C1440 450 1420 530 1380 600L1358 605C1400 520 1410 440 1395 360C1360 210 1280 80 1198 60z" fill="url(#sheen)" />
        <path d="M1355 30H1390C1440 120 1480 260 1470 370C1465 450 1430 520 1415 560C1440 470 1445 400 1430 320C1415 220 1380 110 1340 40z" fill={dk} />
        <path d="M1510 30H1550V150C1540 100 1525 60 1510 30z" fill={dk} />
        <path d="M1095 270V235L1130 190C1180 195 1240 240 1290 320C1340 400 1360 500 1355 590C1350 650 1330 710 1315 750L1300 775L1262 762L1245 730L1215 708L1195 700L1190 520z" fill={lt} />
        <path d="M1115 215L1130 190C1200 195 1280 270 1330 380C1350 440 1362 520 1358 600L1345 640C1350 560 1340 470 1310 390C1270 290 1190 220 1115 215z" fill="url(#sheen)" />
        <path d="M1180 430C1220 480 1240 560 1232 610C1225 640 1215 670 1203 680L1182 520z" fill="url(#steel)" />
        <path d="M1040 30H1150L1155 190L1130 190L1095 235L1078 245L1045 172z" fill={lt} />
        <path d="M1115 30H1145L1155 190H1125z" fill={dk} />
        <path d="M1040 30H1058L1058 160H1042z" fill="#bbb" />
        <path d="M1060 165C1060 215 1085 240 1105 210L1110 180" fill="#fff" />
        <path d="M885 30H975L1025 345C980 330 950 340 925 350L905 220z" fill={lt} />
        <path d="M975 30H1015L1065 285L1025 345z" fill={dk} />
        <path d="M895 30H915L935 175L918 190z" fill="#bdbdbd" />
        <path d="M920 192C930 240 960 270 975 245L985 190L968 228C950 230 935 210 932 178z" fill="#aaa" />
        <path d="M1065 285C1110 300 1170 400 1195 490L1178 515C1150 420 1110 340 1060 310z" fill={dk} />
        <path d="M905 630L1093 692L1100 880L1105 910L1140 945L1185 1010L1170 1060L1145 1130L1090 980L975 830L930 660z" fill={lt} />
        <path d="M1093 692L1115 660L1180 520L1190 640L1195 730L1265 825L1255 870L1190 1005L1140 940L1105 905z" fill={lt} />
        <path d="M1183 520L1180 515L1197 487L1203 700L1190 725z" fill={dk} />
        <path d="M1190 725L1205 695L1215 740L1270 830L1255 870L1215 785L1195 755z" fill={dk} />
        <path d="M1093 692L1110 660L1120 880L1140 935L1185 1005L1170 1050L1150 1000L1115 960L1103 910z" fill={dk} />
        <path d="M1030 345L1065 310L1095 355L1160 515L1175 575L1130 640L1110 590C1090 510 1060 440 1030 410z" fill={dk} />
        <path d="M1060 425L1090 360M1120 590L1175 520" fill="none" />
        <path d="M925 350C960 330 1000 335 1030 350V405C990 395 950 395 925 420z" fill="url(#sheen)" />
        <path d="M875 515C900 450 950 430 985 450C1050 490 1095 590 1110 660L1093 692L905 630C890 590 880 550 875 515z" fill="#fff" />
        <path d="M915 440C950 420 1000 425 1045 450C1085 500 1110 570 1128 640L1110 660C1095 590 1050 490 985 450C950 430 900 450 875 515z" fill="#8a8a8a" />
        <path d="M950 705C1000 700 1060 780 1080 880L1070 960L965 830z" fill="url(#steel)" />
        <path d="M965 830L980 825L1090 980L1075 1015z" fill={dk} />
        <path d="M770 660C720 720 705 780 710 830L830 850L790 650z" fill={lt} />
        <path d="M600 1050C600 970 620 910 650 880C700 850 770 850 810 885L850 930L835 990L860 1060L975 1220C940 1300 890 1430 880 1505L835 1450L770 1465C720 1460 680 1380 670 1340C630 1260 600 1150 600 1050z" fill={lt} />
        <path d="M640 890C680 830 760 800 825 850L855 930L835 955C825 900 790 860 730 855C700 855 660 870 640 890z" fill="url(#sheen)" />
        <path d="M730 440L800 410L845 385L1000 965L960 1040L905 880L910 930L885 960L855 930L830 850z" fill={lt} />
        <path d="M800 408L845 385L1000 965L962 1040z" fill={dk} />
        <path d="M745 432L845 860M760 425L860 860M790 415L905 880" fill="none" />
        <path d="M855 930C865 955 885 960 900 925L905 895L895 925C880 930 865 910 855 878z" fill="#aaa" />
        <path d="M860 1060L880 1030L975 1170L1065 1270L1110 1140L1145 1100L1150 1200L1120 1320L1050 1480L1010 1535H920L835 1450L880 1505L975 1220z" fill={lt} />
        <path d="M835 990L870 1025L995 1180L978 1225L855 1060z" fill={dk} />
        <path d="M978 1225L995 1180C1040 1250 1085 1350 1072 1430L1055 1450C1060 1370 1020 1280 978 1225z" fill="#8d8d8d" />
        <path d="M1090 980L1145 1100L1150 1200L1120 1310L1100 1140L1075 1015z" fill={dk} />
        <path d="M1060 1290L1105 1160L1125 1270L1060 1450C1070 1390 1070 1340 1060 1290z" fill="url(#steel)" />
        <path d="M962 1040L1000 965L1110 1115L1100 1160L1060 1200L970 1100z" fill={dk} />
        <path d="M1010 1000L965 1070M1045 1048L1000 1155M1110 1130L1065 1195" fill="none" />
        <path d="M970 1100L985 1095L1065 1190L1060 1225z" fill="#fff" />
        <path d="M890 1060C920 1030 950 1045 960 1060V1090C930 1085 910 1080 890 1060z" fill="url(#sheen)" />
        <path d="M720 1135C740 1050 810 1040 850 1100C890 1150 912 1240 905 1300C895 1340 875 1370 845 1385L700 1240z" fill="url(#steel)" />
        <path d="M720 1135C750 1060 810 1050 850 1100C810 1070 760 1080 720 1135z" fill="url(#sheen)" />
        <path d="M672 1260C680 1200 740 1170 793 1215L835 1320C850 1400 820 1470 770 1465C720 1450 680 1340 672 1260z" fill={lt} />
        <path d="M705 1275C720 1235 765 1235 778 1275C800 1320 815 1380 790 1415C760 1400 740 1420 725 1535H610L655 1400z" fill="url(#steel)" />
        <path d="M710 1262C730 1225 770 1230 780 1270L765 1258C745 1240 725 1245 710 1262z" fill="url(#sheen)" />
        <path d="M645 1415C665 1365 700 1380 720 1420L730 1535H700L710 1480C700 1420 670 1410 645 1480z" fill={lt} />
        <path d="M635 1535L680 1440C700 1420 715 1450 715 1480L700 1535z" fill="url(#steel)" />
        <path d="M843 1118L793 1215L773 1275L708 1408L680 1470" fill="none" />
        <path d="M600 380C620 420 650 440 672 440C760 430 850 360 885 280L888 270V300C850 370 760 440 672 445C650 440 620 420 600 385z" fill="#999" />
        <path d="M515 30L600 380C620 420 650 440 672 438C760 430 850 360 885 270L865 30z" fill="url(#metal)" />
        <path d="M525 70C600 110 780 90 850 60M545 160C600 220 760 200 860 105M660 378L672 438M848 30V70" fill="none" />
        <path d="M597 210C590 290 630 370 660 378C690 350 700 290 690 205C650 190 620 200 597 210z" fill="#dcdcdc" stroke="none" />
        <path d="M597 212C590 290 630 370 660 378C690 350 700 290 688 205" fill="none" />
        <path d="M612 225C612 280 640 325 690 300C695 280 692 240 686 206C650 196 625 205 612 225z" fill="#e6e6e6" stroke="none" />
        <path d="M604 240C618 305 655 335 692 318L692 296C655 318 628 290 612 222z" fill="url(#sheen)" />
        <path d="M1107 1160C1100 1190 1080 1210 1065 1230L1055 1265" fill="none" />
        {nodes.map(([x, y], i) => <rect key={i} x={x - 4} y={y - 5} width="8" height="10" fill="#000" stroke="none" />)}
      </g>
      <g fontFamily="Noto Sans, sans-serif" fontSize="12" fill="#222">
        <text x="23" y="394">m</text>
        <text x="52" y="406">-0.2</text>
        <text x="34" y="473" fill="#333">z</text>
        <text x="57" y="488" fill="#333">x</text>
        <text x="8" y="506" fill="#333">y</text>
      </g>
      <path d="M38 502V478" stroke="#4a7fb5" strokeWidth="2" />
      <path d="M35 482L38 475L41 482z" fill="#4a7fb5" />
      <path d="M45 502L55 488" stroke="#d9295f" strokeWidth="2" />
      <path d="M52 489L57 484L57 492z" fill="#d9295f" />
      <path d="M44 503H24" stroke="#4aa84a" strokeWidth="2" />
      <path d="M28 500L20 503L28 506z" fill="#4aa84a" />
    </svg>
  );
}

const PATH = 'E:\\Phd_Work\\柴油机关键运动部件数字孪生研究\\20230720连杆计算不同工况数据\\不同工况计算\\三缸往复式发动机_加长计算时间.mph';
const messages = [
  'COMSOL Multiphysics 6.1.0.252',
  `[2023年7月20日 下午9:13] 打开的文件：${PATH}`,
  `[2023年7月20日 下午9:13] 保存的文件：${PATH} (71 MB)`,
  '[2023年7月20日 下午9:13] 求解的自由度数：6340。',
  '[2023年7月20日 下午9:23] 求解时间 (研究：多体分析 (std2)): 584 s。 (9 分钟，44 秒)',
  `[2023年7月20日 下午9:26] 保存的文件：${PATH} (90 MB)`,
  `[2023年7月20日 下午9:27] 保存的文件：${PATH} (90 MB)`,
  `[2023年7月20日 下午9:27] 保存的文件：${PATH} (90 MB)`,
  '[2023年7月20日 下午9:27] 求解的自由度数：6340。',
  '[2023年7月20日 下午9:42] 求解时间 (研究：多体分析 (std2)): 867 s。 (14 分钟，27 秒)',
  `[2023年7月20日 下午9:43] 保存的文件：${PATH} (120 MB)`,
];

const quick = ['newf', 'open', 'save', 'saveAs', 'run', 'undo', 'redo', 'copy', 'paste', 'importf', 'del', 'selbox', 'clear', 'find'];

export default function App() {
  return (
    <div className="flex h-[1117px] w-[2531px] flex-col overflow-hidden bg-[#a05c6b] font-['Noto_Sans','Noto_Sans_CJK_SC',sans-serif] text-[12px] leading-[16px]">
      {/* title bar */}
      <div className="flex h-[27px] shrink-0 items-center">
        <div className="flex w-[1267px] items-center pl-[5px]">
          <div className="flex h-[16px] w-[16px] items-center justify-center rounded-[2px] bg-[#dfe6ee]"><span className="h-[10px] w-[10px] bg-[#2a56a8]" /></div>
          <span className="ml-[13px] h-[18px] w-px bg-[#cdb0b8]" />
          <div className="ml-[8px] flex items-center gap-[8px]">
            {quick.map((q) => <span key={q} className="rounded-[3px] bg-white/50 shadow-[0_0_4px_3px_rgba(255,255,255,0.35)]"><I n={q} /></span>)}
          </div>
          <span className="ml-[6px]"><Caret /></span>
          <span className="ml-[8px] h-[18px] w-px bg-[#cdb0b8]" />
        </div>
        <div className="flex h-[18px] w-[342px] items-center whitespace-nowrap bg-[#bf98a3] text-[#111]">三缸往复式发动机_加长计算时间.mph - COMSOL Multiphysics</div>
        <div className="ml-auto flex items-center pr-[28px] text-white">
          <span className="h-px w-[9px] bg-white" />
          <span className="ml-[36px] h-[11px] w-[8px] border border-white" />
          <span className="ml-[37px] text-[14px] leading-none">X</span>
        </div>
      </div>
      {/* window body */}
      <div className="ml-[4px] mr-[3px] flex h-[1088px] flex-col bg-[#f9fbff] pt-[4px] text-[#222]">
        <Ribbon />
        <div className="flex h-[934px] shrink-0 pl-[7px]">
          {/* model builder */}
          <div className="flex w-[713px] shrink-0 flex-col pt-[2px]">
            <div className="flex h-[932px] flex-col border-x border-b-2 border-[#d6dae0] pl-[5px] pr-[3px]">
              <div className="flex h-[32px] shrink-0 items-center pl-[2px] pt-[12px]">
                <span className="text-[21px] text-[#5d7fb3]">模型开发器</span>
                <div className="ml-auto"><PanelPins /></div>
              </div>
              <div className="flex h-[26px] shrink-0 items-center pl-[4px]">
                <I n="back" /><span className="ml-[7px]"><I n="fwdG" /></span>
                <span className="ml-[4px]"><I n="upG" /></span><span className="ml-[7px]"><I n="downG" /></span>
                <span className="ml-[7px]"><I n="eye" /></span>
                <span className="ml-[7px] flex items-center gap-[4px]"><I n="listUp" /><Caret /></span>
                <span className="ml-[10px] flex items-center gap-[4px]"><I n="listDown" /><Caret /></span>
                <span className="ml-[10px] flex items-center gap-[4px]"><I n="list" /><Caret /></span>
              </div>
              <div className="relative flex min-h-0 flex-1 border-x border-y-2 border-[#d6dae0]">
                <div className="flex w-[685px] flex-col overflow-hidden">
                  {rows.map((r, i) => <TreeRow key={i} row={r} selected={i === 35} />)}
                </div>
                <div className="flex flex-1 flex-col">
                  <div className="h-[198px] shrink-0 text-center text-[9px] leading-[16px] text-[#bbb]">︿</div>
                  <div className="flex-1 bg-[#e6e6e6]" />
                  <div className="h-[17px] shrink-0 text-center text-[9px] leading-[17px] text-[#bbb]">﹀</div>
                </div>
                <div className="absolute left-[59px] top-[693px] h-[34px] w-[164px] border-[3px] border-[#ed1c24]" />
              </div>
            </div>
          </div>
          <div className="ml-[6px]"><SettingsPanel /></div>
          {/* graphics + messages */}
          <div className="ml-[6px] flex w-[999px] shrink-0 flex-col pt-[10px]">
            <div className="flex h-[607px] shrink-0 flex-col border-x border-b-2 border-[#d6dae0]">
              <div className="flex h-[26px] shrink-0 items-end border-b border-[#d6dae0] pl-[4px] pr-[4px] text-[14px] leading-none">
                <div className="flex h-[26px] w-[36px] items-center justify-center border border-b-0 border-[#d6dae0] text-[#2f8fd0]">图形</div>
                <div className="ml-[8px] flex h-[25px] w-[85px] items-center gap-[6px] bg-[#ebebeb] pl-[4px] whitespace-nowrap">探针图“2”<span className="text-[13px] text-[#ccc]">X</span></div>
                <div className="ml-[8px] flex h-[25px] w-[77px] items-center gap-[6px] bg-[#ebebeb] pl-[4px] whitespace-nowrap">收敛图 1<span className="text-[13px] text-[#ccc]">X</span></div>
                <div className="ml-auto mb-[6px]"><PanelPins /></div>
              </div>
              <GfxToolbar />
              <Crankshaft />
            </div>
            <div className="mt-[3px] flex h-[314px] shrink-0 flex-col border-x border-y-2 border-[#d6dae0]">
              <div className="mt-[4px] flex h-[26px] shrink-0 items-end border-b border-[#d6dae0] pl-[4px] pr-[4px] text-[14px] leading-none">
                <div className="flex h-[26px] w-[57px] items-center gap-[6px] border border-b-0 border-[#d6dae0] pl-[5px] text-[#2f6fb0]">消息<span className="text-[13px] text-[#ccc]">X</span></div>
                <div className="ml-[8px] flex h-[25px] w-[34px] items-center justify-center bg-[#ebebeb]">进度</div>
                <div className="ml-[8px] flex h-[25px] w-[34px] items-center justify-center bg-[#ebebeb]">日志</div>
                <div className="ml-[8px] flex h-[25px] w-[79px] items-center gap-[6px] bg-[#ebebeb] pl-[4px] whitespace-nowrap">探针表 2<span className="text-[13px] text-[#ccc]">X</span></div>
                <div className="ml-auto mb-[6px]"><PanelPins /></div>
              </div>
              <div className="flex h-[29px] shrink-0 items-center pl-[7px]">
                <I n="broom" />
                <span className="ml-[3px] flex h-[20px] w-[20px] items-center justify-center rounded-[2px] border border-[#4aa0e8] bg-[#9fd0f8]"><I n="winPlot" /></span>
              </div>
              <div className="relative ml-[5px] flex h-[248px] w-[989px] flex-col border border-[#d6dae0]">
                <div className="min-h-0 flex-1 overflow-hidden pl-[2px] pt-[1px] tracking-[0.06px]">
                  {messages.map((m) => <div key={m} className="h-[17px] whitespace-pre leading-[17px]">{m}</div>)}
                </div>
                <div className="flex h-[17px] shrink-0 items-center bg-[#f4f6fa] text-[#bbb]">
                  <span className="w-[17px] text-center">‹</span>
                  <div className="h-full w-[937px] bg-[#e4e5e7]" />
                  <span className="ml-auto w-[17px] text-center">›</span>
                </div>
              </div>
            </div>
          </div>
        </div>
        <div className="flex h-[36px] items-center whitespace-nowrap pl-[1840px] pt-[9px]">2.05 GB | 2.88 GB</div>
      </div>
    </div>
  );
}
